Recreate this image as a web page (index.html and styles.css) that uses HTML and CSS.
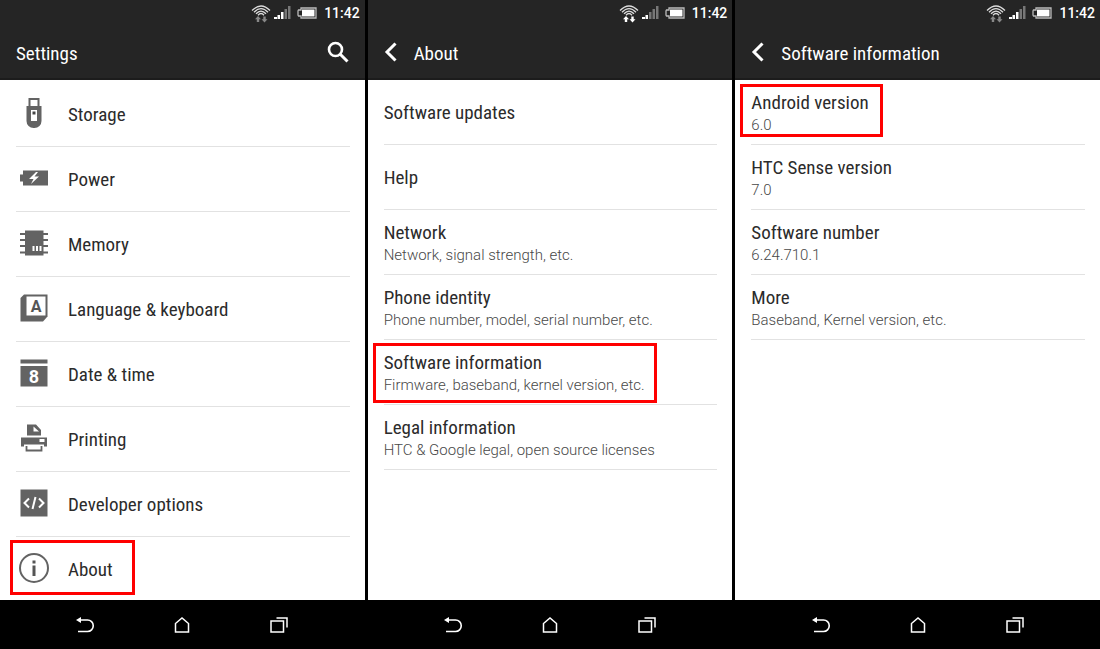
FILE: index.html
```
<!DOCTYPE html>
<html lang="en">
<head>
    <meta charset="UTF-8">
    <meta name="viewport" content="width=device-width, initial-scale=1.0">
    <title>Settings</title>
    <link rel="stylesheet" href="styles.css">
</head>
<body>
    <!-- Shared icons -->
    <svg class="sprite" aria-hidden="true">
        <symbol id="wifi" viewBox="0 0 20 20">
            <g fill="none" stroke="#ddd" stroke-width="1.3">
                <path d="M1 7.500Q10 -1.500 19 7.500M3 9.200Q10 2 17 9.200M5 10.800Q10 5.300 15 10.800M7 12.200Q10 8.800 13 12.200"/>
            </g>
            <path class="up" d="M7 13l3 3.300H8.200V19H5.800V16.300H4z"/>
            <path class="down" d="M13.500 19.500l3-3.300h-1.800V13.500h-2.400v2.700h-1.800z"/>
        </symbol>
        <symbol id="battery" viewBox="0 0 20 12">
            <path d="M4 1h15v10H4V9H1.500L1 8V4l.5-1H4z" fill="none" stroke="#bbb" stroke-width="1.3"/>
            <path d="M5 2.500h12.500v7H5z" fill="#fff"/>
        </symbol>
        <symbol id="chevron" viewBox="0 0 14 20">
            <path d="M11.500 1.500L3 10l8.500 8.500" fill="none" stroke="#fff" stroke-width="3"/>
        </symbol>
        <symbol id="nav-back" viewBox="0 0 20 20">
            <path d="M4 5h8.500a5.500 5.500 0 0 1 0 11.500H3" fill="none" stroke="#fff" stroke-width="1.6"/>
            <path d="M1 5L6 2v6z" fill="#fff"/>
        </symbol>
        <symbol id="nav-home" viewBox="0 0 20 20">
            <path d="M3.500 8.500L10 3l6.500 5.500v8.500h-13z" fill="none" stroke="#fff" stroke-width="1.5"/>
        </symbol>
        <symbol id="nav-recent" viewBox="0 0 20 20">
            <path d="M2 6h12.500v11H2zM7.500 3H18v9.500" fill="none" stroke="#fff" stroke-width="1.500"/>
        </symbol>
    </svg>

    <main class="screens">
        <section class="screen">
            <header>
                <div class="status">
                    <svg class="wifi" aria-hidden="true"><use href="#wifi"/></svg>
                    <svg class="signal" viewBox="0 0 17 14" aria-hidden="true">
                        <path d="M0 11h3v2H0zM3.500 9h2.500v4H3.500zM7 6h2.500v7H7z" fill="#fff"/>
                        <path d="M10.500 3H13v10h-2.500zM14 0h2.500v13H14z" fill="#777"/>
                    </svg>
                    <svg class="battery" aria-hidden="true"><use href="#battery"/></svg>
                    <time>11:42</time>
                </div>
                <div class="title-bar">
                    <h1>Settings</h1>
                    <button class="search" aria-label="Search">
                        <svg viewBox="0 0 22 22" aria-hidden="true">
                            <circle cx="8.500" cy="8.500" r="6.500" fill="none" stroke="#fff" stroke-width="2.600"/>
                            <path d="M13 13l7.500 7.500" stroke="#fff" stroke-width="3"/>
                        </svg>
                    </button>
                </div>
            </header>
            <nav class="list main-list">
                <a class="row" href="#storage">
                    <svg class="icon" viewBox="0 0 30 30" aria-hidden="true">
                        <path d="M9.500 0h11v8h2v15a7 7 0 0 1-7 7h-1a7 7 0 0 1-7-7V8h2zM11.500 2v6h7V2zM12 12v11h6V12z" fill="#636363" fill-rule="evenodd"/>
                        <path d="M13.500 13.500h3v3h-3z" fill="#444"/>
                    </svg>
                    Storage
                </a>
                <a class="row" href="#power">
                    <svg class="icon" viewBox="0 0 30 30" aria-hidden="true">
                        <path d="M4 7.500h25v15H4v-4H1v-7h3z" fill="#636363"/>
                        <path d="M17 9l-7 7h4.500L12 21l8-7.500h-4.500L19 9z" fill="#fff"/>
                    </svg>
                    Power
                </a>
                <a class="row" href="#memory">
                    <svg class="icon" viewBox="0 0 30 30" aria-hidden="true">
                        <path d="M6 2.500h18.500v25H6z" fill="#636363"/>
                        <path d="M1 6h28M1 12h28M1 18h28M1 24.500h28" stroke="#636363" stroke-width="2"/>
                        <path d="M14.500 18v5M18 18v5M21.500 18v5" stroke="#fff" stroke-width="2"/>
                    </svg>
                    Memory
                </a>
                <a class="row" href="#language">
                    <svg class="icon" viewBox="0 0 30 30" aria-hidden="true">
                        <path d="M5 1.500h23.500v22L24 28.500H1.500V5z" fill="#636363"/>
                        <path d="M7.500 3.500h19v19h-19z" fill="#fff"/>
                        <text x="17" y="19" class="letter">A</text>
                    </svg>
                    Language &amp; keyboard
                </a>
                <a class="row" href="#date">
                    <svg class="icon" viewBox="0 0 30 30" aria-hidden="true">
                        <path d="M1.500 1.500h27v4h-27zM1.500 8h27v20.500h-27z" fill="#636363"/>
                        <text x="15" y="24.500" class="day">8</text>
                    </svg>
                    Date &amp; time
                </a>
                <a class="row" href="#printing">
                    <svg class="icon" viewBox="0 0 30 30" aria-hidden="true">
                        <path d="M8 1.500h9l5 5.500v5.500H8zM14.500 3.500v5h5.500z" fill="#636363" fill-rule="evenodd"/>
                        <path d="M2 14.500h26v9h-3v-2H5v2H2zM20.500 16v3h5v-3z" fill="#636363" fill-rule="evenodd"/>
                        <path d="M7.500 23v4.500h15V23" fill="none" stroke="#636363" stroke-width="1.800"/>
                    </svg>
                    Printing
                </a>
                <a class="row" href="#developer">
                    <svg class="icon" viewBox="0 0 30 30" aria-hidden="true">
                        <path d="M1.500 1.500h27v27h-27z" fill="#636363"/>
                        <path d="M10 10.500L5.500 15l4.500 4.500M20 10.500l4.500 4.500-4.500 4.500M16.500 9l-3 12" fill="none" stroke="#fff" stroke-width="2"/>
                    </svg>
                    Developer options
                </a>
                <a class="row marked mark-about" href="#about">
                    <svg class="icon" viewBox="0 0 30 30" aria-hidden="true">
                        <circle cx="15" cy="15" r="14" fill="none" stroke="#636363" stroke-width="2"/>
                        <path d="M13.500 7.500h3v3h-3zM13.500 12.500h3V23h-3z" fill="#555"/>
                    </svg>
                    About
                </a>
            </nav>
            <footer>
                <button aria-label="Back"><svg><use href="#nav-back"/></svg></button>
                <button aria-label="Home"><svg><use href="#nav-home"/></svg></button>
                <button aria-label="Recent apps"><svg><use href="#nav-recent"/></svg></button>
            </footer>
        </section>

        <section class="screen">
            <header>
                <div class="status">
                    <svg class="wifi receiving" aria-hidden="true"><use href="#wifi"/></svg>
                    <svg class="signal" viewBox="0 0 17 14" aria-hidden="true">
                        <path d="M0 11h3v2H0zM3.500 9h2.500v4H3.500z" fill="#fff"/>
                        <path d="M7 6h2.500v7H7zM10.500 3H13v10h-2.500zM14 0h2.500v13H14z" fill="#777"/>
                    </svg>
                    <svg class="battery" aria-hidden="true"><use href="#battery"/></svg>
                    <time>11:42</time>
                </div>
                <div class="title-bar">
                    <button class="back" aria-label="Back"><svg><use href="#chevron"/></svg></button>
                    <h1>About</h1>
                </div>
            </header>
            <nav class="list">
                <a class="row" href="#updates">Software updates</a>
                <a class="row" href="#help">Help</a>
                <a class="row" href="#network">
                    <div>Network<small>Network, signal strength, etc.</small></div>
                </a>
                <a class="row" href="#identity">
                    <div>Phone identity<small>Phone number, model, serial number, etc.</small></div>
                </a>
                <a class="row marked mark-software" href="#software">
                    <div>Software information<small>Firmware, baseband, kernel version, etc.</small></div>
                </a>
                <a class="row" href="#legal">
                    <div>Legal information<small>HTC &amp; Google legal, open source licenses</small></div>
                </a>
            </nav>
            <footer>
                <button aria-label="Back"><svg><use href="#nav-back"/></svg></button>
                <button aria-label="Home"><svg><use href="#nav-home"/></svg></button>
                <button aria-label="Recent apps"><svg><use href="#nav-recent"/></svg></button>
            </footer>
        </section>

        <section class="screen">
            <header>
                <div class="status">
                    <svg class="wifi" aria-hidden="true"><use href="#wifi"/></svg>
                    <svg class="signal" viewBox="0 0 17 14" aria-hidden="true">
                        <path d="M0 11h3v2H0zM3.500 9h2.500v4H3.500zM7 6h2.500v7H7z" fill="#fff"/>
                        <path d="M10.500 3H13v10h-2.500zM14 0h2.500v13H14z" fill="#777"/>
                    </svg>
                    <svg class="battery" aria-hidden="true"><use href="#battery"/></svg>
                    <time>11:42</time>
                </div>
                <div class="title-bar">
                    <button class="back" aria-label="Back"><svg><use href="#chevron"/></svg></button>
                    <h1>Software information</h1>
                </div>
            </header>
            <div class="list">
                <div class="row marked mark-version">
                    <div>Android version<small>6.0</small></div>
                </div>
                <div class="row">
                    <div>HTC Sense version<small>7.0</small></div>
                </div>
                <div class="row">
                    <div>Software number<small>6.24.710.1</small></div>
                </div>
                <a class="row" href="#more">
                    <div>More<small>Baseband, Kernel version, etc.</small></div>
                </a>
            </div>
            <footer>
                <button aria-label="Back"><svg><use href="#nav-back"/></svg></button>
                <button aria-label="Home"><svg><use href="#nav-home"/></svg></button>
                <button aria-label="Recent apps"><svg><use href="#nav-recent"/></svg></button>
            </footer>
        </section>
    </main>
</body>
</html>
```
FILE: styles.css
```
* {
    box-sizing: border-box;
}
body {
    margin: 0;
    background-color: #000;
    font-family: "Roboto Condensed", "Liberation Sans Narrow", Roboto, sans-serif;
    font-size: 19px;
    color: #2b2b2b;
}
svg {
    display: block;
    flex: none;
}
button {
    padding: 0;
    border: none;
    background: none;
    cursor: pointer;
}
.sprite {
    display: none;
}
.screens {
    display: grid;
    grid-template-columns: repeat(3, 1fr);
    gap: 3px;
    height: 100vh;
}
.screen {
    display: flex;
    flex-direction: column;
    min-width: 0;
    min-height: 0;
}

/* Status bar and title */
header {
    background-color: #252525;
    border-bottom: 2px solid #1c1c1c;
    color: #fff;
}
.status {
    display: flex;
    justify-content: flex-end;
    align-items: center;
    height: 26px;
    padding-right: 5px;
}
.wifi {
    width: 20px;
    height: 20px;
    margin-right: 3px;
    fill: #888;
}
.receiving {
    fill: #fff;
}
.signal {
    width: 17px;
    height: 14px;
    margin-right: 6px;
}
.battery {
    width: 20px;
    height: 12px;
    margin-right: 7px;
}
.status time {
    font: 500 14px/26px Roboto, sans-serif;
}
.title-bar {
    display: flex;
    align-items: center;
    height: 52px;
    padding: 0 16px;
}
h1 {
    margin: 0;
    padding-top: 3px;
    font-size: 19px;
    font-weight: 400;
    line-height: 24px;
}
.search {
    margin-left: auto;
}
.search svg {
    width: 22px;
    height: 22px;
}
.back {
    margin-right: 16px;
}
.back svg {
    width: 14px;
    height: 20px;
}

/* Setting rows */
.list {
    flex: 1;
    min-height: 0;
    overflow: hidden;
    padding: 0 15px 0 16px;
    background-color: #fff;
}
.main-list {
    padding-top: 2px;
}
.row {
    position: relative;
    display: flex;
    align-items: center;
    height: 65px;
    border-bottom: 1px solid #e2e2e2;
    line-height: 23px;
    color: inherit;
    text-decoration: none;
}
.row > div {
    padding-top: 3px;
}
.main-list .row:last-child {
    border-bottom-color: transparent;
}
.row small {
    display: block;
    font-family: Roboto, sans-serif;
    font-size: 15px;
    font-weight: 300;
    color: #484848;
}
.icon {
    width: 30px;
    height: 30px;
    margin: 0 19px 2px 3px;
}
.letter,
.day {
    font-family: Roboto, sans-serif;
    font-weight: 700;
    text-anchor: middle;
}
.letter {
    font-size: 16px;
    fill: #555;
}
.day {
    font-size: 18px;
    fill: #fff;
}

/* Red frames round the rows to tap */
.marked::after {
    content: "";
    box-sizing: border-box;
    position: absolute;
    top: 3px;
    left: -11px;
    border: 3px solid #f00;
}
.mark-about::after {
    left: -6px;
    width: 125px;
    height: 55px;
}
.mark-software::after {
    width: 284px;
    height: 60px;
}
.mark-version::after {
    top: 4px;
    width: 143px;
    height: 53px;
}

footer {
    display: flex;
    justify-content: center;
    align-items: center;
    gap: 77px;
    height: 49px;
    background-color: #000;
}
footer svg {
    width: 20px;
    height: 20px;
}
```
